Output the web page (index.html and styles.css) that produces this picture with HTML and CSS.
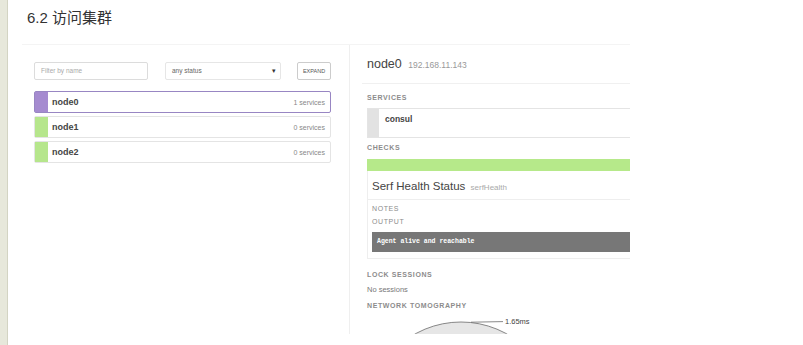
FILE: index.html
```html
<!DOCTYPE html>
<html lang="zh-CN">
<head>
    <meta charset="UTF-8">
    <title>6.2 访问集群</title>
    <link rel="stylesheet" href="styles.css">
</head>
<body>
<div class="page">
    <div class="rail"></div>
    <main class="article">
        <h2 class="heading">6.2 访问集群</h2>
        <div class="shot">
            <section class="nodes">
                <div class="toolbar">
                    <div class="filter">Filter by name</div>
                    <div class="status">any status<span class="caret">&#9662;</span></div>
                    <div class="expand">EXPAND</div>
                </div>
                <div class="node-list">
                    <div class="node active">
                        <span class="flag purple"></span>
                        <span class="node-name">node0</span>
                        <span class="node-count">1 services</span>
                    </div>
                    <div class="node">
                        <span class="flag green"></span>
                        <span class="node-name">node1</span>
                        <span class="node-count">0 services</span>
                    </div>
                    <div class="node">
                        <span class="flag green"></span>
                        <span class="node-name">node2</span>
                        <span class="node-count">0 services</span>
                    </div>
                </div>
            </section>

            <section class="detail">
                <div class="detail-head">
                    <span class="detail-name">node0</span>
                    <span class="detail-ip">192.168.11.143</span>
                </div>

                <div class="label services-label">SERVICES</div>
                <div class="service">
                    <span class="service-flag"></span>
                    <span class="service-name">consul</span>
                </div>

                <div class="label checks-label">CHECKS</div>
                <div class="check-bar"></div>
                <div class="check">
                    <div class="check-title">Serf Health Status <span class="check-id">serfHealth</span></div>
                    <div class="label check-notes">NOTES</div>
                    <div class="label check-output">OUTPUT</div>
                    <pre class="output">Agent alive and reachable</pre>
                </div>

                <div class="label lock-label">LOCK SESSIONS</div>
                <div class="no-sessions">No sessions</div>
                <div class="label tomo-label">NETWORK TOMOGRAPHY</div>
                <svg class="tomo" width="200" height="23" viewBox="0 0 200 23">
                    <circle cx="94" cy="105" r="94" fill="#e6e6e6" stroke="#6b6b6b" stroke-width="0.8"/>
                    <line x1="104" y1="11.2" x2="136" y2="10.6" stroke="#6b6b6b" stroke-width="0.8"/>
                    <text x="138" y="13" class="tomo-text">1.65ms</text>
                </svg>
            </section>
        </div>
    </main>
</div>
</body>
</html>
```

FILE: styles.css
```css
body {
    margin: 0;
    height: 345px;
    overflow: hidden;
    background: #fff;
    font-family: "Liberation Sans", Arial, "Noto Sans CJK SC", sans-serif;
    color: #333;
}
.page {
    display: flex;
    height: 345px;
}
.rail {
    width: 7px;
    background: #e7e8db;
    border-right: 1px solid #d3d4c3;
}
.article {
    flex: 1;
    padding-left: 14px;
}
.heading {
    margin: 8px 0 0 5px;
    font-size: 15px;
    line-height: 20px;
    font-weight: normal;
    color: #333;
}

/* embedded console screenshot */
.shot {
    display: flex;
    width: 608px;
    height: 289px;
    margin-top: 16px;
    border-top: 1px solid #f4f4f4;
    overflow: hidden;
}
.nodes {
    width: 297px;
    padding: 17px 18px 0 12px;
}
.toolbar {
    display: flex;
    height: 18px;
}
.filter, .status, .expand {
    box-sizing: border-box;
    height: 18px;
    border: 1px solid #dcdcdc;
    border-radius: 2px;
    font-size: 6.5px;
    line-height: 16px;
    padding-left: 6px;
}
.filter {
    width: 114px;
    color: #aaa;
}
.status {
    display: flex;
    width: 116px;
    margin-left: 17px;
    color: #666;
    padding-right: 4px;
    border-color: #e6e6e6;
}
.caret {
    margin-left: auto;
    font-size: 7px;
    color: #333;
}
.expand {
    width: 34px;
    margin-left: auto;
    padding-left: 0;
    text-align: center;
    font-size: 5.5px;
    color: #555;
    border-color: #ccc;
}
.node-list {
    margin-top: 11px;
}
.node {
    display: flex;
    align-items: center;
    box-sizing: border-box;
    height: 22px;
    margin-bottom: 3px;
    border: 1px solid #e4e4e4;
    border-radius: 2px;
}
.node.active {
    border-color: #9886c3;
}
.flag {
    align-self: stretch;
    width: 13px;
}
.purple {
    background: #a58bd0;
}
.green {
    background: #b6e68c;
}
.node-name {
    margin-left: 4px;
    font-size: 9px;
    font-weight: bold;
    color: #444;
}
.node-count {
    margin-left: auto;
    padding-right: 5px;
    font-size: 7px;
    color: #888;
}

.detail {
    flex: 1;
    border-left: 1px solid #efefef;
    padding-left: 17px;
}
.detail-head {
    margin-left: -5px;
    padding: 10px 0 10px 5px;
    border-bottom: 1px solid #f0f0f0;
    line-height: 16px;
}
.detail-name {
    font-size: 12.5px;
    color: #444;
}
.detail-ip {
    margin-left: 2px;
    font-size: 8.5px;
    color: #999;
}
.label {
    font-size: 7px;
    line-height: 10px;
    font-weight: bold;
    letter-spacing: 0.6px;
    color: #8c8c8c;
}
.services-label {
    margin-top: 9px;
}
.service {
    display: flex;
    box-sizing: border-box;
    height: 30px;
    margin-top: 5px;
    border: 1px solid #e4e4e4;
    border-right: none;
}
.service-flag {
    width: 11px;
    background: #e2e2e2;
}
.service-name {
    margin: 5px 0 0 6px;
    font-size: 8.5px;
    line-height: 10px;
    font-weight: bold;
    color: #444;
}
.checks-label {
    margin-top: 5px;
}
.check-bar {
    height: 12px;
    margin-top: 6px;
    background: #b6e98a;
}
.check {
    border: 1px solid #eeeeee;
    border-top: none;
    border-right: none;
    padding-bottom: 6px;
}
.check-title {
    padding: 7px 0 3px 4px;
    border-bottom: 1px solid #eeeeee;
    font-size: 11.5px;
    line-height: 16px;
    color: #444;
}
.check-id {
    margin-left: 2px;
    font-size: 8px;
    color: #aaa;
}
.check-notes {
    margin: 4px 0 0 4px;
    font-weight: normal;
}
.check-output {
    margin: 3px 0 0 4px;
    font-weight: normal;
}
.output {
    height: 20px;
    margin: 5px 0 0 4px;
    padding-left: 5px;
    background: #777;
    color: #fff;
    font-family: "Liberation Mono", "Courier New", monospace;
    font-size: 6.5px;
    font-weight: bold;
    line-height: 20px;
}
.lock-label {
    margin-top: 11px;
}
.no-sessions {
    margin-top: 5px;
    font-size: 7.5px;
    line-height: 10px;
    color: #777;
}
.tomo-label {
    margin-top: 6px;
}
.tomo {
    display: block;
}
.tomo-text {
    font-family: "Liberation Sans", Arial, sans-serif;
    font-size: 7.5px;
    fill: #444;
}
```
